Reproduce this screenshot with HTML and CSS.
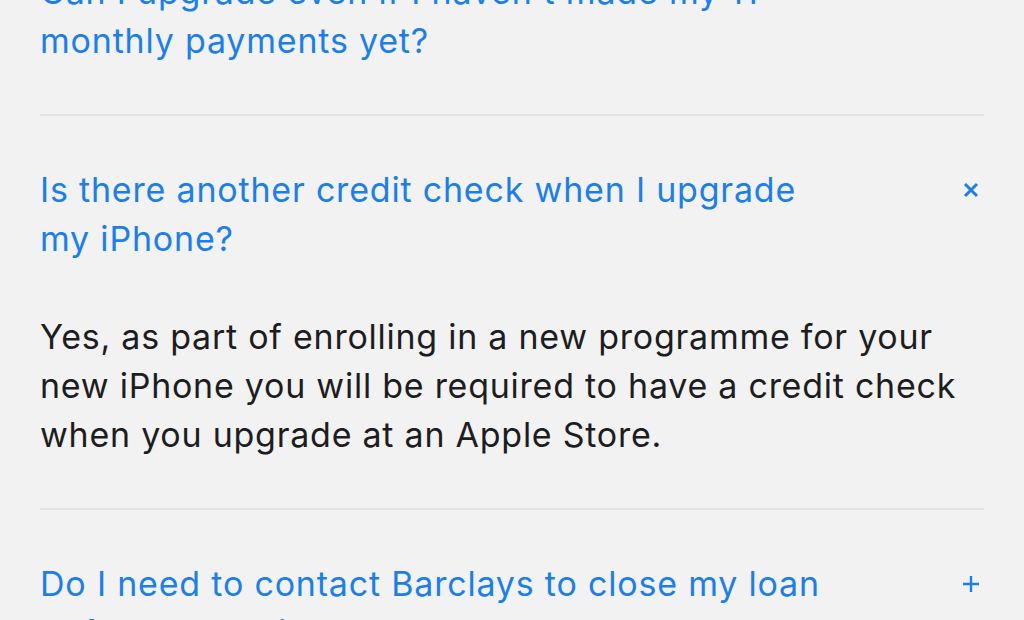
FILE: index.html
```html
<!DOCTYPE html>
<html>
<head>
  <title>Upgrade FAQ</title>
  <link rel="stylesheet" href="styles.css">
</head>
<body>

<section class="faq">
  <div class="item">
    <div class="question">
      <span class="q-text">Can I upgrade even if I haven't made my 11 monthly payments yet?</span>
      <span class="toggle"><svg width="18" height="18" viewBox="0 0 18 18"><path d="M9 1v16M1 9h16" stroke="#1d7fe6" stroke-width="2.4" fill="none"/></svg></span>
    </div>
  </div>

  <div class="item open">
    <div class="question">
      <span class="q-text">Is there another credit check when I upgrade my iPhone?</span>
      <span class="toggle"><svg width="16" height="16" viewBox="0 0 16 16"><path d="M2 2l12 12M14 2l-12 12" stroke="#1d7fe6" stroke-width="3" fill="none"/></svg></span>
    </div>
    <p class="answer">Yes, as part of enrolling in a new programme for your new iPhone you will be required to have a credit check when you upgrade at an Apple Store.</p>
  </div>

  <div class="item">
    <div class="question">
      <span class="q-text">Do I need to contact Barclays to close my loan before I trade in?</span>
      <span class="toggle"><svg width="18" height="18" viewBox="0 0 18 18"><path d="M9 1v16M1 9h16" stroke="#1d7fe6" stroke-width="2.4" fill="none"/></svg></span>
    </div>
  </div>
</section>

</body>
</html>
```

FILE: styles.css
```css
body {
  margin: 0;
  padding: 0;
  background: #f2f2f2;
  font-family: Inter, "Noto Sans", sans-serif;
  overflow: hidden;
}

.faq {
  margin: -82px 40px 0;
}

.item {
  padding: 49px 0;
  border-bottom: 2px solid #e3e3e3;
}

.question {
  display: flex;
  align-items: flex-start;
  justify-content: space-between;
  color: #1d7fe6;
  font-size: 34px;
  line-height: 49px;
  letter-spacing: 0.8px;
}

.q-text {
  max-width: 800px;
}

.toggle {
  width: 26px;
  height: 49px;
  display: flex;
  align-items: center;
  justify-content: center;
}

.answer {
  margin: 49px 0 0;
  color: #1d1d1f;
  font-size: 34px;
  line-height: 49px;
  letter-spacing: 0.75px;
}
```
